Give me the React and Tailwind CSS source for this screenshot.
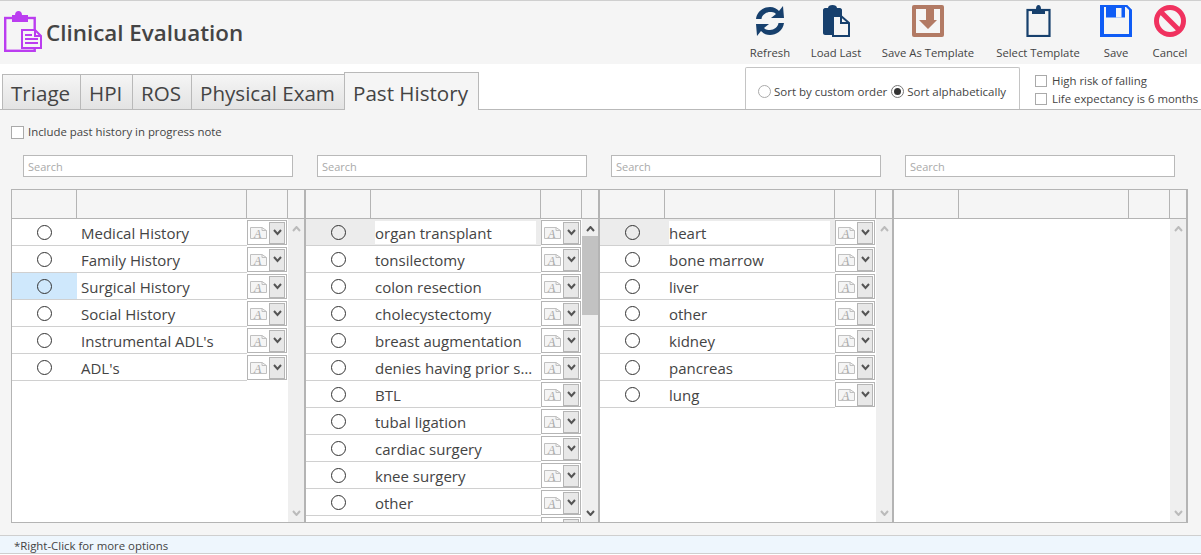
const FONT = "font-['Open_Sans',sans-serif]";

function RefreshIcon() {
  return (
    <svg width="29" height="32" viewBox="0 0 29 32" fill="#17406d">
      <path d="M0 14 C1 6 8 2 14 2 C18 2 21 4 23 6 L27 1 L28 13 L15 13 L20 9 C18 7 16 7 14 7 C10 7 6 10 5.5 14 Z" />
      <path d="M28 18 C27 26 20 30 14 30 C10 30 7 28 5 26 L1 31 L0 19 L13 19 L8 23 C10 25 12 25 14 25 C18 25 22 22 22.5 18 Z" />
    </svg>
  );
}

function LoadLastIcon() {
  return (
    <svg width="27" height="32" viewBox="0 0 27 32">
      <path fill="#17406d" d="M2 3 H5 C5 1 7 0 9.5 0 C12 0 14 1 14 3 H17 C18 3 19 4 19 5 V28 C19 29 18 30 17 30 H2 C1 30 0 29 0 28 V5 C0 4 1 3 2 3 Z" />
      <path fill="#f5f5f5" stroke="#17406d" strokeWidth="2" d="M10 11 H18 L26 18 V31 H10 Z" />
      <path fill="#17406d" d="M17 11 H19 V17 H26 V19 H17 Z" />
    </svg>
  );
}

function SaveTemplateIcon() {
  return (
    <svg width="32" height="32" viewBox="0 0 32 32">
      <rect x="0" y="0" width="32" height="32" rx="2" fill="#b27a64" />
      <rect x="4" y="4" width="24" height="24" fill="#f5f5f5" />
      <path fill="#b27a64" d="M14 0 H22 V15 H25 L16 24 L7 15 H14 Z" />
    </svg>
  );
}

function SelectTemplateIcon() {
  return (
    <svg width="25" height="32" viewBox="0 0 25 32">
      <rect x="1.5" y="5" width="22" height="26" fill="none" stroke="#17406d" strokeWidth="2.2" />
      <path fill="#17406d" d="M6 4 H10 C10 1.5 11 0 12.5 0 C14 0 15 1.5 15 4 H19 V9 H6 Z" />
    </svg>
  );
}

function SaveIcon() {
  return (
    <svg width="32" height="32" viewBox="0 0 32 32">
      <path fill="#0f5cf5" d="M0 0 H27 L32 5 V32 H0 Z" />
      <rect x="4" y="2" width="25" height="27" fill="#f5f5f5" />
      <rect x="6" y="0" width="19" height="12.5" fill="#0f5cf5" />
      <rect x="16" y="3" width="5.5" height="9.5" fill="#f5f5f5" />
      <path fill="#0f5cf5" d="M27 0 L32 5 V10 H29 V5 L25 1 Z" />
    </svg>
  );
}

function CancelIcon() {
  return (
    <svg width="32" height="32" viewBox="0 0 32 32" fill="none" stroke="#f0325f" strokeWidth="5">
      <circle cx="16" cy="16" r="13.5" />
      <path d="M6.5 6.5 L25.5 25.5" />
    </svg>
  );
}

function NoteIcon() {
  return (
    <svg width="38" height="41" viewBox="0 0 38 41">
      <rect x="1.2" y="7" width="29.5" height="32.8" fill="none" stroke="#bb3df0" strokeWidth="2.4" />
      <path fill="#bb3df0" d="M8 4 H11 C11 1.5 12.5 0 14.5 0 C16.5 0 18 1.5 18 4 H24 V11 H8 Z" />
      <path fill="#f5f5f5" stroke="#bb3df0" strokeWidth="2" d="M18 19 H31 L37 25 V37 H18 Z" />
      <path fill="#bb3df0" d="M30 19 H32 V24 H37 V26 H30 Z M21 23 H28 V25 H21 Z M21 27 H34 V29 H21 Z M21 31 H34 V33 H21 Z" />
    </svg>
  );
}

function ToolButton({ icon, label, className }) {
  return (
    <div className={`flex flex-col items-center ${className}`}>
      <div className="h-[32px] flex items-center justify-center">{icon}</div>
      <span className="mt-[8px] text-[11.3px] leading-[16px] text-[#444] whitespace-nowrap">{label}</span>
    </div>
  );
}

function NoteDropdown() {
  return (
    <div className="w-[40px] h-[25px] mt-px border border-[#b5b5b5] flex items-center justify-between pl-[2px] pr-px bg-white">
      <svg width="17" height="12" viewBox="0 0 17 12">
        <path fill="#f5f5f5" stroke="#c0c0c0" d="M0.5 0.5 H12 L16.5 3.5 V11.5 H0.5 Z" />
        <path fill="none" stroke="#c0c0c0" d="M12 0.5 V3.5 H16.5" />
        <text x="4" y="10.5" fontSize="12" fontStyle="italic" fill="#a8a8a8" fontFamily="Liberation Serif, serif">A</text>
      </svg>
      <div className="w-[16px] h-[22px] border border-[#b5b5b5] bg-[#e8e8e8] flex items-center justify-center">
        <svg width="9" height="7" viewBox="0 0 9 7" fill="none" stroke="#555" strokeWidth="2">
          <path d="M1 1 L4.5 5 L8 1" />
        </svg>
      </div>
    </div>
  );
}

function Row({ text, highlight, first, boxPad }) {
  return (
    <div className="flex h-[27px] shrink-0">
      <div className={`w-[65px] border-b border-[#d0d0d0] flex items-center justify-center ${highlight ? "bg-[#cfe8fc]" : first ? "bg-[#ececec]" : "bg-white"}`}>
        <span className="block w-[15px] h-[15px] rounded-full border-[1.5px] border-[#333]" />
      </div>
      <div className={`w-[170px] border-b border-[#d0d0d0] flex items-center ${first ? `bg-[#ececec] pl-[4px] ${boxPad}` : "bg-white"}`}>
        <span className={`block w-full pt-[2px] text-[15px] leading-[21px] text-[#444] truncate ${first ? "bg-white" : "pl-[4px]"}`}>{text}</span>
      </div>
      <NoteDropdown />
    </div>
  );
}

function Column({ rows, scrollbar, activeFirst, highlightIndex, boxPad }) {
  return (
    <div className="w-[294px] shrink-0 border-r-2 border-[#b4b4b4] flex flex-col">
      <div className="h-[29px] flex shrink-0 border-b border-[#b4b4b4]">
        <div className="w-[65px] border-r border-[#b4b4b4]" />
        <div className="w-[170px] border-r border-[#b4b4b4]" />
        <div className="w-[41px] border-r border-[#b4b4b4]" />
        <div className="flex-1" />
      </div>
      <div className="flex-1 flex min-h-0 bg-white">
        <div className="w-[276px] flex flex-col overflow-hidden">
          {rows.map((r, i) => (
            <Row key={i} text={r} first={activeFirst && i === 0} highlight={highlightIndex === i} boxPad={boxPad} />
          ))}
        </div>
        <div className="flex-1 bg-[#efefef] flex flex-col items-center relative">
          <svg className="mt-[7px]" width="9" height="6" viewBox="0 0 9 6" fill="none" stroke={scrollbar ? "#555" : "#bbb"} strokeWidth="2">
            <path d="M1 5 L4.5 1 L8 5" />
          </svg>
          {scrollbar && <div className="w-full h-[79px] mt-[4px] bg-[#c2c2c2]" />}
          <svg className="absolute bottom-[6px]" width="9" height="6" viewBox="0 0 9 6" fill="none" stroke={scrollbar ? "#555" : "#bbb"} strokeWidth="2">
            <path d="M1 1 L4.5 5 L8 1" />
          </svg>
        </div>
      </div>
    </div>
  );
}

const COLUMNS = [
  { rows: ["Medical History", "Family History", "Surgical History", "Social History", "Instrumental ADL's", "ADL's"], highlightIndex: 2 },
  {
    rows: ["organ transplant", "tonsilectomy", "colon resection", "cholecystectomy", "breast augmentation", "denies having prior surgery", "BTL", "tubal ligation", "cardiac surgery", "knee surgery", "other", ""],
    activeFirst: true,
    scrollbar: true,
    boxPad: "pr-[5px]",
  },
  { rows: ["heart", "bone marrow", "liver", "other", "kidney", "pancreas", "lung"], activeFirst: true, boxPad: "pr-[5px]" },
  { rows: [] },
];

const TABS = [
  { label: "Triage", width: "w-[79px]" },
  { label: "HPI", width: "w-[53px]" },
  { label: "ROS", width: "w-[60px]" },
  { label: "Physical Exam", width: "w-[154px]" },
];

export default function App() {
  return (
    <div className={`${FONT} w-[1201px] h-[555px] bg-white overflow-hidden`}>
      {/* Header */}
      <div className="h-[64px] border-t border-[#cfcfcf] bg-[#f5f5f5] flex justify-between">
        <div className="flex items-start pt-[10px] pl-[4px]">
          <NoteIcon />
          <h1 className="ml-[4px] mt-[6px] text-[22.4px] leading-[32px] font-semibold text-[#444]">Clinical Evaluation</h1>
        </div>
        <div className="flex pt-[4px] pr-[9px]">
          <ToolButton className="w-[50px]" icon={<RefreshIcon />} label="Refresh" />
          <ToolButton className="w-[60px] ml-[11px]" icon={<LoadLastIcon />} label="Load Last" />
          <ToolButton className="w-[100px] ml-[12px]" icon={<SaveTemplateIcon />} label="Save As Template" />
          <ToolButton className="w-[90px] ml-[15px]" icon={<SelectTemplateIcon />} label="Select Template" />
          <ToolButton className="w-[40px] ml-[13px]" icon={<SaveIcon />} label="Save" />
          <ToolButton className="w-[44px] ml-[12px]" icon={<CancelIcon />} label="Cancel" />
        </div>
      </div>

      {/* Tabs + sort options */}
      <div className="h-[45px] flex items-end justify-between">
        <div className="flex items-end pl-[2px]">
          {TABS.map((t) => (
            <div key={t.label} className={`${t.width} h-[35px] pl-[8px] pt-px -mr-px border border-b-0 border-[#b9b9b9] bg-gradient-to-b from-[#f5f5f5] to-[#e3e3e3] text-[20.6px] leading-[35px] text-[#444]`}>
              {t.label}
            </div>
          ))}
          <div className="w-[135px] h-[38px] pl-[8px] pt-[3px] border border-b-0 border-[#b9b9b9] bg-[#f5f5f5] text-[20.6px] leading-[35px] text-[#444] relative top-px z-10">
            Past History
          </div>
        </div>
        <div className="flex items-end">
          <div className="w-[275px] h-[42px] border border-b-0 border-[#c4c4c4] rounded-t-[2px] flex items-center pl-[12px] pt-[6px] text-[11.5px] text-[#444]">
            <span className="w-[13px] h-[13px] rounded-full border border-[#aaa] bg-white" />
            <span className="ml-[3px]">Sort by custom order</span>
            <span className="ml-[4px] w-[13px] h-[13px] rounded-full border border-[#777] bg-white flex items-center justify-center">
              <span className="w-[7px] h-[7px] rounded-full bg-[#333]" />
            </span>
            <span className="ml-[3px]">Sort alphabetically</span>
          </div>
          <div className="w-[181px] pl-[15px] text-[11.4px] leading-[18px] text-[#444] pb-[1px] whitespace-nowrap">
            <div className="flex items-center gap-[5px]"><span className="w-[12px] h-[12px] border border-[#aaa] bg-white" />High risk of falling</div>
            <div className="flex items-center gap-[5px]"><span className="w-[12px] h-[12px] border border-[#aaa] bg-white" />Life expectancy is 6 months</div>
          </div>
        </div>
      </div>

      {/* Panel */}
      <div className="h-[426px] border-t border-[#b9b9b9] bg-[#f5f5f5] flex flex-col">
        <label className="mt-[14px] ml-[11px] flex items-center text-[11.4px] leading-[16px] text-[#444]">
          <span className="w-[13px] h-[13px] border border-[#aaa] bg-white mr-[4px]" />
          Include past history in progress note
        </label>
        <div className="mt-[15px] pl-[23px] flex gap-[24px]">
          {[0, 1, 2, 3].map((i) => (
            <input
              key={i}
              readOnly
              placeholder="Search"
              className="w-[270px] h-[22px] border border-[#b9b9b9] bg-white px-[4px] text-[11px] placeholder:text-[#aaa] outline-none"
            />
          ))}
        </div>
        <div className="mt-[12px] ml-[11px] w-[1177px] h-[334px] border border-r-0 border-[#b4b4b4] flex">
          {COLUMNS.map((c, i) => (
            <Column key={i} {...c} />
          ))}
        </div>
      </div>

      {/* Status bar */}
      <div className="h-[19px] border-y border-[#cfcfcf] bg-[#eef6fd] pl-[14px] text-[11.4px] leading-[19px] text-[#444]">
        *Right-Click for more options
      </div>
    </div>
  );
}
